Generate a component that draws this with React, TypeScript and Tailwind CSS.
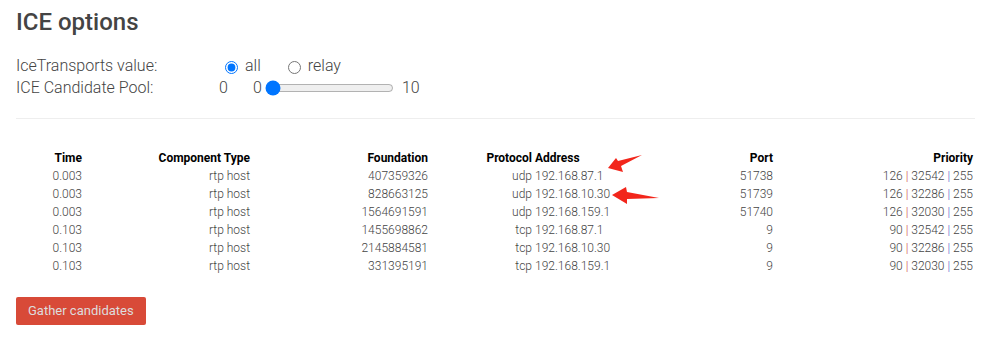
import { useState } from 'react';

const rows = [
  { time: '0.003', type: 'rtp host', foundation: '407359326', proto: 'udp', addr: '192.168.87.1', port: '51738', pri: ['126', '32542', '255'] },
  { time: '0.003', type: 'rtp host', foundation: '828663125', proto: 'udp', addr: '192.168.10.30', port: '51739', pri: ['126', '32286', '255'] },
  { time: '0.003', type: 'rtp host', foundation: '1564691591', proto: 'udp', addr: '192.168.159.1', port: '51740', pri: ['126', '32030', '255'] },
  { time: '0.103', type: 'rtp host', foundation: '1455698862', proto: 'tcp', addr: '192.168.87.1', port: '9', pri: ['90', '32542', '255'] },
  { time: '0.103', type: 'rtp host', foundation: '2145884581', proto: 'tcp', addr: '192.168.10.30', port: '9', pri: ['90', '32286', '255'] },
  { time: '0.103', type: 'rtp host', foundation: '331395191', proto: 'tcp', addr: '192.168.159.1', port: '9', pri: ['90', '32030', '255'] },
];

const cols = 'grid grid-cols-[66px_168px_178px_104px_170px_71px_200px]';

export default function App() {
  const [transport, setTransport] = useState('all');
  const [pool, setPool] = useState(0);

  return (
    <div className="relative min-h-[355px] w-[991px] bg-white px-4 pt-2 font-['Roboto',sans-serif] text-[#444]">
      {/* Heading */}
      <h1 className="text-[24px] leading-[28px] font-medium">ICE options</h1>

      {/* Options */}
      <div className="mt-[19px] flex flex-col text-[16px] leading-[22px] font-light">
        <div className="flex items-center">
          <span className="w-[204px]">IceTransports value:</span>
          <label className="flex items-center">
            <input
              type="radio"
              name="transport"
              className="mx-[5px] mt-[2px] h-[13px] w-[13px]"
              checked={transport === 'all'}
              onChange={() => setTransport('all')}
            />
            <span className="ml-[2px]">all</span>
          </label>
          <label className="ml-[22px] flex items-center">
            <input
              type="radio"
              name="transport"
              className="mx-[5px] mt-[2px] h-[13px] w-[13px]"
              checked={transport === 'relay'}
              onChange={() => setTransport('relay')}
            />
            <span className="ml-[2px]">relay</span>
          </label>
        </div>
        <div className="flex items-center">
          <span className="w-[203px]">ICE Candidate Pool:</span>
          <span className="w-[34px]">{pool}</span>
          <span>0</span>
          <input
            type="range"
            min={0}
            max={10}
            value={pool}
            onChange={(e) => setPool(Number(e.target.value))}
            className="mx-[3px] w-[129px]"
          />
          <span className="ml-[5px]">10</span>
        </div>
      </div>

      <hr className="mt-[19px] border-t border-[#eee]" />

      {/* Candidates table */}
      <div className="mt-[30px] text-[12px] leading-[18px]">
        <div className={`${cols} font-bold text-black`}>
          <span className="text-right">Time</span>
          <span className="text-right">Component Type</span>
          <span className="text-right">Foundation</span>
          <span className="text-right">Protocol</span>
          <span className="pl-[3px]">Address</span>
          <span className="text-right">Port</span>
          <span className="text-right">Priority</span>
        </div>
        {rows.map((r, i) => (
          <div key={i} className={`${cols} font-light text-[#444]`}>
            <span className="text-right">{r.time}</span>
            <span className="text-right">{r.type}</span>
            <span className="text-right">{r.foundation}</span>
            <span className="text-right">{r.proto}</span>
            <span className="pl-[3px]">{r.addr}</span>
            <span className="text-right">{r.port}</span>
            <span className="text-right">
              {r.pri[0]}
              <span className="text-[#c44]"> | </span>
              {r.pri[1]}
              <span className="text-[#55c]"> | </span>
              {r.pri[2]}
            </span>
          </div>
        ))}
      </div>

      <button className="mt-[22px] h-[28px] rounded-[2px] bg-[#d84a38] px-[12px] text-[13px] text-[#ddd]">
        Gather candidates
      </button>

      {/* Annotation arrows */}
      <svg className="pointer-events-none absolute left-0 top-0" width="991" height="355">
        <polygon points="608,168 616,158 618,161 642,155 621,166 623,172" fill="#f2261b" />
        <polygon points="612,195 626,187 627,192 659,198 627,199 627,204" fill="#f2261b" />
      </svg>
    </div>
  );
}
